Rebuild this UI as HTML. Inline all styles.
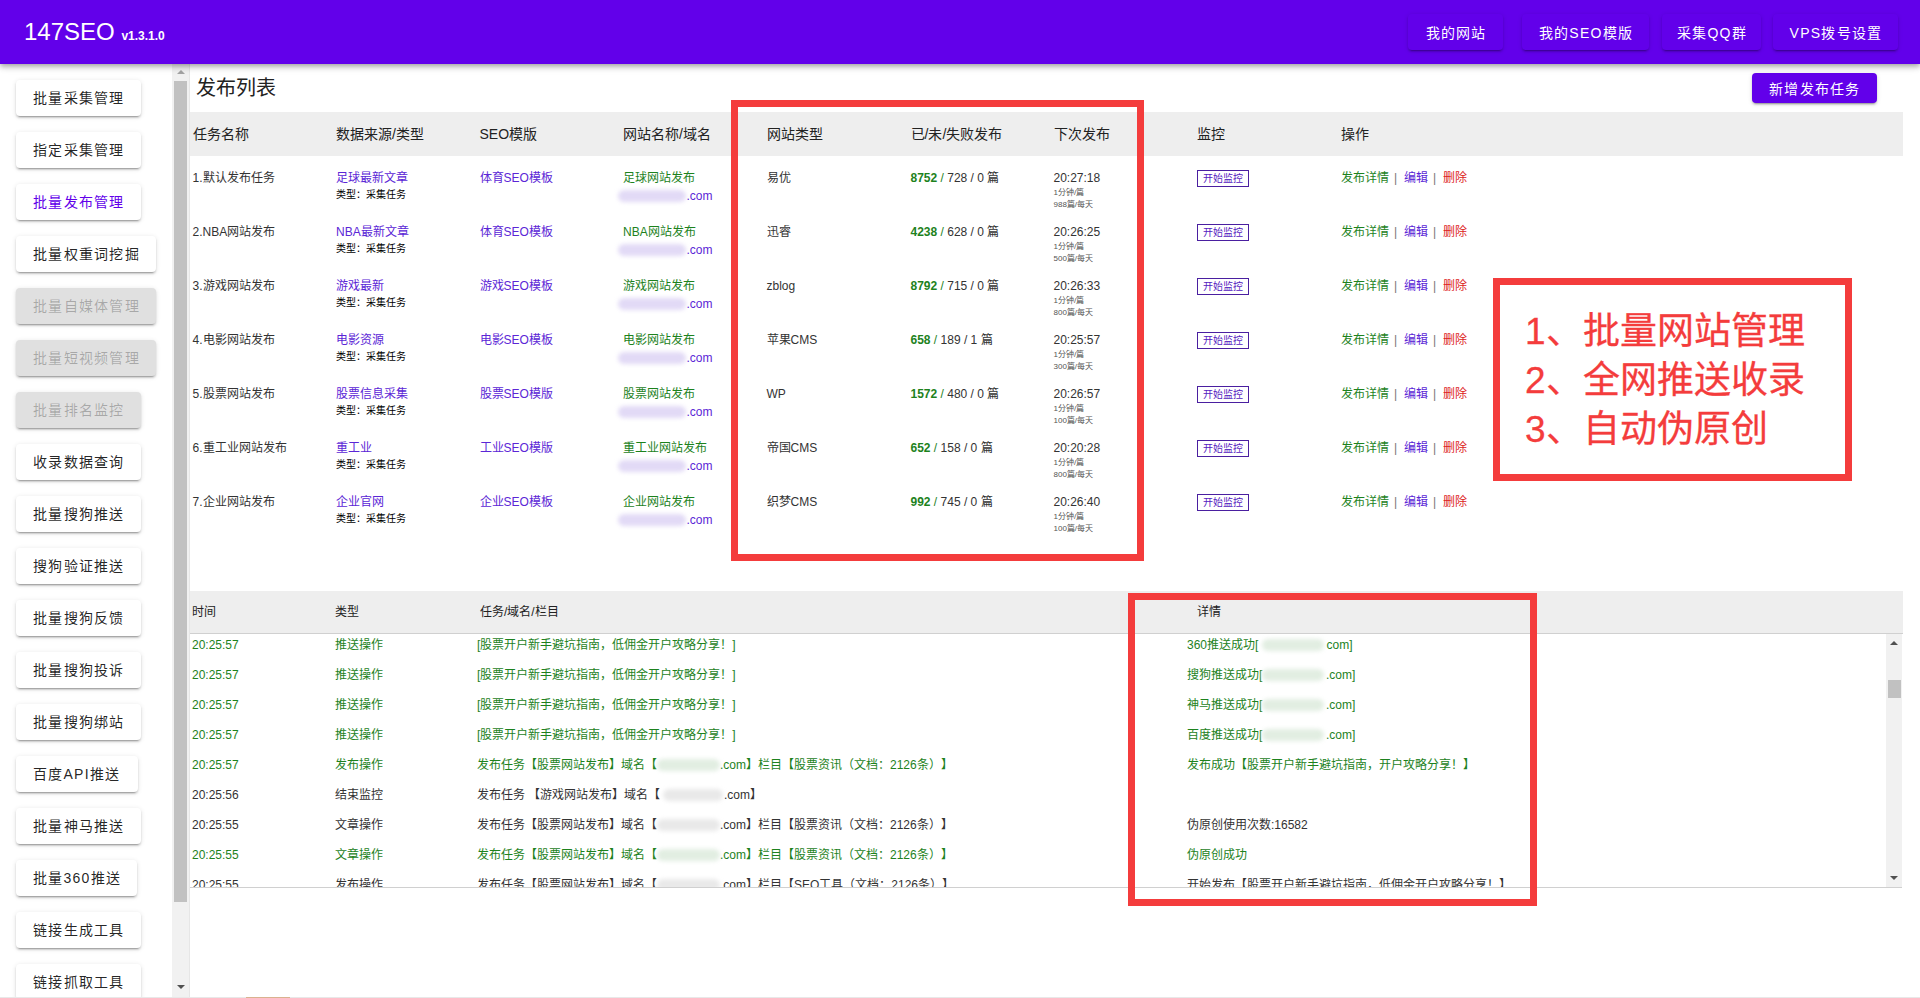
<!DOCTYPE html><html lang="zh-CN"><head><meta charset="utf-8"><style>
*{box-sizing:border-box}
html,body{margin:0;padding:0;width:1920px;height:998px;overflow:hidden;background:#fff;font-family:"Liberation Sans",sans-serif;text-spacing-trim:space-all}
.t{position:absolute;white-space:nowrap}
.hdr{position:absolute;left:0;top:0;width:1920px;height:64px;background:#6200ea;box-shadow:0 2px 4px -1px rgba(0,0,0,.2),0 4px 5px 0 rgba(0,0,0,.14),0 1px 10px 0 rgba(0,0,0,.12);z-index:5}
.nb{position:absolute;top:14px;height:36px;background:#6200ea;border-radius:4px;box-shadow:0 3px 1px -2px rgba(0,0,0,.2),0 2px 2px 0 rgba(0,0,0,.14),0 1px 5px 0 rgba(0,0,0,.12);color:#fff;font-size:14px;letter-spacing:1.25px;font-weight:500;line-height:38px;white-space:nowrap}
.sb{position:absolute;left:16px;height:36px;background:#fff;border-radius:4px;box-shadow:0 3px 1px -2px rgba(0,0,0,.2),0 2px 2px 0 rgba(0,0,0,.14),0 1px 5px 0 rgba(0,0,0,.12);color:rgba(0,0,0,.87);font-size:14px;letter-spacing:1.25px;font-weight:500;line-height:36px;padding-left:17px;white-space:nowrap}
.sb.dis{background:#e0e0e0;color:rgba(0,0,0,.26)}
.sb.act{color:#6200ea}
.box{position:absolute;border:7px solid #f43c3c;z-index:10}
.blob{position:absolute;border-radius:8px;filter:blur(2px)}
</style></head><body>
<div class="hdr">
<div class="t" style="left:24px;top:18px;font-size:24px;line-height:28px;color:#fff">147SEO <span style="font-size:12px;font-weight:bold">v1.3.1.0</span></div>
<div class="nb" style="left:1408px;width:95px;text-align:center;padding-left:1px">我的网站</div>
<div class="nb" style="left:1522px;width:127px;text-align:center;padding-left:1px">我的SEO模版</div>
<div class="nb" style="left:1662px;width:99px;text-align:center;padding-left:1px">采集QQ群</div>
<div class="nb" style="left:1773px;width:125px;text-align:center;padding-left:1px">VPS拨号设置</div>
</div>
<div class="sb" style="top:80px">批量采集管理<span style="display:inline-block;width:16px"></span></div>
<div class="sb" style="top:132px">指定采集管理<span style="display:inline-block;width:16px"></span></div>
<div class="sb act" style="top:184px">批量发布管理<span style="display:inline-block;width:16px"></span></div>
<div class="sb" style="top:236px">批量权重词挖掘<span style="display:inline-block;width:16px"></span></div>
<div class="sb dis" style="top:288px">批量自媒体管理<span style="display:inline-block;width:16px"></span></div>
<div class="sb dis" style="top:340px">批量短视频管理<span style="display:inline-block;width:16px"></span></div>
<div class="sb dis" style="top:392px">批量排名监控<span style="display:inline-block;width:16px"></span></div>
<div class="sb" style="top:444px">收录数据查询<span style="display:inline-block;width:16px"></span></div>
<div class="sb" style="top:496px">批量搜狗推送<span style="display:inline-block;width:16px"></span></div>
<div class="sb" style="top:548px">搜狗验证推送<span style="display:inline-block;width:16px"></span></div>
<div class="sb" style="top:600px">批量搜狗反馈<span style="display:inline-block;width:16px"></span></div>
<div class="sb" style="top:652px">批量搜狗投诉<span style="display:inline-block;width:16px"></span></div>
<div class="sb" style="top:704px">批量搜狗绑站<span style="display:inline-block;width:16px"></span></div>
<div class="sb" style="top:756px">百度API推送<span style="display:inline-block;width:18px"></span></div>
<div class="sb" style="top:808px">批量神马推送<span style="display:inline-block;width:16px"></span></div>
<div class="sb" style="top:860px">批量360推送<span style="display:inline-block;width:16px"></span></div>
<div class="sb" style="top:912px">链接生成工具<span style="display:inline-block;width:16px"></span></div>
<div class="sb" style="top:964px">链接抓取工具<span style="display:inline-block;width:16px"></span></div>
<div style="position:absolute;left:172px;top:64px;width:17px;height:934px;background:#f1f1f1"></div>
<div style="position:absolute;left:174px;top:81px;width:13px;height:821px;background:#c1c1c1"></div>
<div style="position:absolute;left:176.5px;top:70px;width:0;height:0;border-left:4px solid transparent;border-right:4px solid transparent;border-bottom:4px solid #a3a3a3"></div>
<div style="position:absolute;left:176.5px;top:985px;width:0;height:0;border-left:4px solid transparent;border-right:4px solid transparent;border-top:4px solid #505050"></div>
<div style="position:absolute;left:189px;top:64px;width:1px;height:934px;background:#e6e6e6"></div>
<div class="t" style="left:196px;top:74.0px;font-size:20px;line-height:28px;color:#222;">发布列表</div>
<div style="position:absolute;left:1752px;top:73px;width:125px;height:30px;background:#6200ea;border-radius:4px;box-shadow:0 3px 1px -2px rgba(0,0,0,.2),0 2px 2px 0 rgba(0,0,0,.14),0 1px 5px 0 rgba(0,0,0,.12)"></div>
<div class="t" style="left:1769px;top:79.0px;font-size:14px;line-height:20px;color:#fff;letter-spacing:1.25px;font-weight:500">新增发布任务</div>
<div style="position:absolute;left:190px;top:112px;width:1713px;height:44px;background:#eeeeee"></div>
<div class="t" style="left:192.5px;top:124.0px;font-size:14px;line-height:20px;color:#222;">任务名称</div>
<div class="t" style="left:336px;top:124.0px;font-size:14px;line-height:20px;color:#222;">数据来源/类型</div>
<div class="t" style="left:479.5px;top:124.0px;font-size:14px;line-height:20px;color:#222;">SEO模版</div>
<div class="t" style="left:623px;top:124.0px;font-size:14px;line-height:20px;color:#222;">网站名称/域名</div>
<div class="t" style="left:766.5px;top:124.0px;font-size:14px;line-height:20px;color:#222;">网站类型</div>
<div class="t" style="left:910.5px;top:124.0px;font-size:14px;line-height:20px;color:#222;">已/未/失败发布</div>
<div class="t" style="left:1053.5px;top:124.0px;font-size:14px;line-height:20px;color:#222;">下次发布</div>
<div class="t" style="left:1197px;top:124.0px;font-size:14px;line-height:20px;color:#222;">监控</div>
<div class="t" style="left:1341px;top:124.0px;font-size:14px;line-height:20px;color:#222;">操作</div>
<div class="t" style="left:192.5px;top:168.5px;font-size:12px;line-height:18px;color:#333333;">1.默认发布任务</div>
<div class="t" style="left:336px;top:168.5px;font-size:12px;line-height:18px;color:#5b26d6;">足球最新文章</div>
<div class="t" style="left:336px;top:187.5px;font-size:10px;line-height:14px;color:#000;">类型：采集任务</div>
<div class="t" style="left:479.5px;top:168.5px;font-size:12px;line-height:18px;color:#5b26d6;">体育SEO模板</div>
<div class="t" style="left:623px;top:168.5px;font-size:12px;line-height:18px;color:#1d821d;">足球网站发布</div>
<div class="blob" style="left:618px;top:189.5px;width:68px;height:12px;background:#e2daf6"></div>
<div class="t" style="left:686.5px;top:186.5px;font-size:12px;line-height:18px;color:#5b26d6;">.com</div>
<div class="t" style="left:766.5px;top:168.5px;font-size:12px;line-height:18px;color:#333333;">易优</div>
<div class="t" style="left:910.5px;top:168.5px;font-size:12px;line-height:18px;color:#333333;"><b style="color:#1d821d">8752</b><span style="color:#1d821d"> / </span>728 / 0 篇</div>
<div class="t" style="left:1053.5px;top:168.5px;font-size:12px;line-height:18px;color:#333333;">20:27:18</div>
<div class="t" style="left:1053.5px;top:186.5px;font-size:8px;line-height:12px;color:#555;">1分钟/篇</div>
<div class="t" style="left:1053.5px;top:198.5px;font-size:8px;line-height:12px;color:#555;">988篇/每天</div>
<div style="position:absolute;left:1197px;top:170.0px;width:52px;height:17px;border:1px solid #4a1fa0;"></div>
<div class="t" style="left:1202.5px;top:171.5px;font-size:10px;line-height:14px;color:#5520c0;">开始监控</div>
<div class="t" style="left:1341px;top:168.5px;font-size:12px;line-height:18px;color:#1d821d;">发布详情</div>
<div class="t" style="left:1394px;top:168.5px;font-size:12px;line-height:18px;color:#777;">|</div>
<div class="t" style="left:1404px;top:168.5px;font-size:12px;line-height:18px;color:#5b26d6;">编辑</div>
<div class="t" style="left:1433px;top:168.5px;font-size:12px;line-height:18px;color:#777;">|</div>
<div class="t" style="left:1443px;top:168.5px;font-size:12px;line-height:18px;color:#dd2222;">删除</div>
<div class="t" style="left:192.5px;top:222.5px;font-size:12px;line-height:18px;color:#333333;">2.NBA网站发布</div>
<div class="t" style="left:336px;top:222.5px;font-size:12px;line-height:18px;color:#5b26d6;">NBA最新文章</div>
<div class="t" style="left:336px;top:241.5px;font-size:10px;line-height:14px;color:#000;">类型：采集任务</div>
<div class="t" style="left:479.5px;top:222.5px;font-size:12px;line-height:18px;color:#5b26d6;">体育SEO模板</div>
<div class="t" style="left:623px;top:222.5px;font-size:12px;line-height:18px;color:#1d821d;">NBA网站发布</div>
<div class="blob" style="left:618px;top:243.5px;width:68px;height:12px;background:#e2daf6"></div>
<div class="t" style="left:686.5px;top:240.5px;font-size:12px;line-height:18px;color:#5b26d6;">.com</div>
<div class="t" style="left:766.5px;top:222.5px;font-size:12px;line-height:18px;color:#333333;">迅睿</div>
<div class="t" style="left:910.5px;top:222.5px;font-size:12px;line-height:18px;color:#333333;"><b style="color:#1d821d">4238</b><span style="color:#1d821d"> / </span>628 / 0 篇</div>
<div class="t" style="left:1053.5px;top:222.5px;font-size:12px;line-height:18px;color:#333333;">20:26:25</div>
<div class="t" style="left:1053.5px;top:240.5px;font-size:8px;line-height:12px;color:#555;">1分钟/篇</div>
<div class="t" style="left:1053.5px;top:252.5px;font-size:8px;line-height:12px;color:#555;">500篇/每天</div>
<div style="position:absolute;left:1197px;top:224.0px;width:52px;height:17px;border:1px solid #4a1fa0;"></div>
<div class="t" style="left:1202.5px;top:225.5px;font-size:10px;line-height:14px;color:#5520c0;">开始监控</div>
<div class="t" style="left:1341px;top:222.5px;font-size:12px;line-height:18px;color:#1d821d;">发布详情</div>
<div class="t" style="left:1394px;top:222.5px;font-size:12px;line-height:18px;color:#777;">|</div>
<div class="t" style="left:1404px;top:222.5px;font-size:12px;line-height:18px;color:#5b26d6;">编辑</div>
<div class="t" style="left:1433px;top:222.5px;font-size:12px;line-height:18px;color:#777;">|</div>
<div class="t" style="left:1443px;top:222.5px;font-size:12px;line-height:18px;color:#dd2222;">删除</div>
<div class="t" style="left:192.5px;top:276.5px;font-size:12px;line-height:18px;color:#333333;">3.游戏网站发布</div>
<div class="t" style="left:336px;top:276.5px;font-size:12px;line-height:18px;color:#5b26d6;">游戏最新</div>
<div class="t" style="left:336px;top:295.5px;font-size:10px;line-height:14px;color:#000;">类型：采集任务</div>
<div class="t" style="left:479.5px;top:276.5px;font-size:12px;line-height:18px;color:#5b26d6;">游戏SEO模板</div>
<div class="t" style="left:623px;top:276.5px;font-size:12px;line-height:18px;color:#1d821d;">游戏网站发布</div>
<div class="blob" style="left:618px;top:297.5px;width:68px;height:12px;background:#e2daf6"></div>
<div class="t" style="left:686.5px;top:294.5px;font-size:12px;line-height:18px;color:#5b26d6;">.com</div>
<div class="t" style="left:766.5px;top:276.5px;font-size:12px;line-height:18px;color:#333333;">zblog</div>
<div class="t" style="left:910.5px;top:276.5px;font-size:12px;line-height:18px;color:#333333;"><b style="color:#1d821d">8792</b><span style="color:#1d821d"> / </span>715 / 0 篇</div>
<div class="t" style="left:1053.5px;top:276.5px;font-size:12px;line-height:18px;color:#333333;">20:26:33</div>
<div class="t" style="left:1053.5px;top:294.5px;font-size:8px;line-height:12px;color:#555;">1分钟/篇</div>
<div class="t" style="left:1053.5px;top:306.5px;font-size:8px;line-height:12px;color:#555;">800篇/每天</div>
<div style="position:absolute;left:1197px;top:278.0px;width:52px;height:17px;border:1px solid #4a1fa0;"></div>
<div class="t" style="left:1202.5px;top:279.5px;font-size:10px;line-height:14px;color:#5520c0;">开始监控</div>
<div class="t" style="left:1341px;top:276.5px;font-size:12px;line-height:18px;color:#1d821d;">发布详情</div>
<div class="t" style="left:1394px;top:276.5px;font-size:12px;line-height:18px;color:#777;">|</div>
<div class="t" style="left:1404px;top:276.5px;font-size:12px;line-height:18px;color:#5b26d6;">编辑</div>
<div class="t" style="left:1433px;top:276.5px;font-size:12px;line-height:18px;color:#777;">|</div>
<div class="t" style="left:1443px;top:276.5px;font-size:12px;line-height:18px;color:#dd2222;">删除</div>
<div class="t" style="left:192.5px;top:330.5px;font-size:12px;line-height:18px;color:#333333;">4.电影网站发布</div>
<div class="t" style="left:336px;top:330.5px;font-size:12px;line-height:18px;color:#5b26d6;">电影资源</div>
<div class="t" style="left:336px;top:349.5px;font-size:10px;line-height:14px;color:#000;">类型：采集任务</div>
<div class="t" style="left:479.5px;top:330.5px;font-size:12px;line-height:18px;color:#5b26d6;">电影SEO模板</div>
<div class="t" style="left:623px;top:330.5px;font-size:12px;line-height:18px;color:#1d821d;">电影网站发布</div>
<div class="blob" style="left:618px;top:351.5px;width:68px;height:12px;background:#e2daf6"></div>
<div class="t" style="left:686.5px;top:348.5px;font-size:12px;line-height:18px;color:#5b26d6;">.com</div>
<div class="t" style="left:766.5px;top:330.5px;font-size:12px;line-height:18px;color:#333333;">苹果CMS</div>
<div class="t" style="left:910.5px;top:330.5px;font-size:12px;line-height:18px;color:#333333;"><b style="color:#1d821d">658</b><span style="color:#1d821d"> / </span>189 / 1 篇</div>
<div class="t" style="left:1053.5px;top:330.5px;font-size:12px;line-height:18px;color:#333333;">20:25:57</div>
<div class="t" style="left:1053.5px;top:348.5px;font-size:8px;line-height:12px;color:#555;">1分钟/篇</div>
<div class="t" style="left:1053.5px;top:360.5px;font-size:8px;line-height:12px;color:#555;">300篇/每天</div>
<div style="position:absolute;left:1197px;top:332.0px;width:52px;height:17px;border:1px solid #4a1fa0;"></div>
<div class="t" style="left:1202.5px;top:333.5px;font-size:10px;line-height:14px;color:#5520c0;">开始监控</div>
<div class="t" style="left:1341px;top:330.5px;font-size:12px;line-height:18px;color:#1d821d;">发布详情</div>
<div class="t" style="left:1394px;top:330.5px;font-size:12px;line-height:18px;color:#777;">|</div>
<div class="t" style="left:1404px;top:330.5px;font-size:12px;line-height:18px;color:#5b26d6;">编辑</div>
<div class="t" style="left:1433px;top:330.5px;font-size:12px;line-height:18px;color:#777;">|</div>
<div class="t" style="left:1443px;top:330.5px;font-size:12px;line-height:18px;color:#dd2222;">删除</div>
<div class="t" style="left:192.5px;top:384.5px;font-size:12px;line-height:18px;color:#333333;">5.股票网站发布</div>
<div class="t" style="left:336px;top:384.5px;font-size:12px;line-height:18px;color:#5b26d6;">股票信息采集</div>
<div class="t" style="left:336px;top:403.5px;font-size:10px;line-height:14px;color:#000;">类型：采集任务</div>
<div class="t" style="left:479.5px;top:384.5px;font-size:12px;line-height:18px;color:#5b26d6;">股票SEO模版</div>
<div class="t" style="left:623px;top:384.5px;font-size:12px;line-height:18px;color:#1d821d;">股票网站发布</div>
<div class="blob" style="left:618px;top:405.5px;width:68px;height:12px;background:#e2daf6"></div>
<div class="t" style="left:686.5px;top:402.5px;font-size:12px;line-height:18px;color:#5b26d6;">.com</div>
<div class="t" style="left:766.5px;top:384.5px;font-size:12px;line-height:18px;color:#333333;">WP</div>
<div class="t" style="left:910.5px;top:384.5px;font-size:12px;line-height:18px;color:#333333;"><b style="color:#1d821d">1572</b><span style="color:#1d821d"> / </span>480 / 0 篇</div>
<div class="t" style="left:1053.5px;top:384.5px;font-size:12px;line-height:18px;color:#333333;">20:26:57</div>
<div class="t" style="left:1053.5px;top:402.5px;font-size:8px;line-height:12px;color:#555;">1分钟/篇</div>
<div class="t" style="left:1053.5px;top:414.5px;font-size:8px;line-height:12px;color:#555;">100篇/每天</div>
<div style="position:absolute;left:1197px;top:386.0px;width:52px;height:17px;border:1px solid #4a1fa0;"></div>
<div class="t" style="left:1202.5px;top:387.5px;font-size:10px;line-height:14px;color:#5520c0;">开始监控</div>
<div class="t" style="left:1341px;top:384.5px;font-size:12px;line-height:18px;color:#1d821d;">发布详情</div>
<div class="t" style="left:1394px;top:384.5px;font-size:12px;line-height:18px;color:#777;">|</div>
<div class="t" style="left:1404px;top:384.5px;font-size:12px;line-height:18px;color:#5b26d6;">编辑</div>
<div class="t" style="left:1433px;top:384.5px;font-size:12px;line-height:18px;color:#777;">|</div>
<div class="t" style="left:1443px;top:384.5px;font-size:12px;line-height:18px;color:#dd2222;">删除</div>
<div class="t" style="left:192.5px;top:438.5px;font-size:12px;line-height:18px;color:#333333;">6.重工业网站发布</div>
<div class="t" style="left:336px;top:438.5px;font-size:12px;line-height:18px;color:#5b26d6;">重工业</div>
<div class="t" style="left:336px;top:457.5px;font-size:10px;line-height:14px;color:#000;">类型：采集任务</div>
<div class="t" style="left:479.5px;top:438.5px;font-size:12px;line-height:18px;color:#5b26d6;">工业SEO模版</div>
<div class="t" style="left:623px;top:438.5px;font-size:12px;line-height:18px;color:#1d821d;">重工业网站发布</div>
<div class="blob" style="left:618px;top:459.5px;width:68px;height:12px;background:#e2daf6"></div>
<div class="t" style="left:686.5px;top:456.5px;font-size:12px;line-height:18px;color:#5b26d6;">.com</div>
<div class="t" style="left:766.5px;top:438.5px;font-size:12px;line-height:18px;color:#333333;">帝国CMS</div>
<div class="t" style="left:910.5px;top:438.5px;font-size:12px;line-height:18px;color:#333333;"><b style="color:#1d821d">652</b><span style="color:#1d821d"> / </span>158 / 0 篇</div>
<div class="t" style="left:1053.5px;top:438.5px;font-size:12px;line-height:18px;color:#333333;">20:20:28</div>
<div class="t" style="left:1053.5px;top:456.5px;font-size:8px;line-height:12px;color:#555;">1分钟/篇</div>
<div class="t" style="left:1053.5px;top:468.5px;font-size:8px;line-height:12px;color:#555;">800篇/每天</div>
<div style="position:absolute;left:1197px;top:440.0px;width:52px;height:17px;border:1px solid #4a1fa0;"></div>
<div class="t" style="left:1202.5px;top:441.5px;font-size:10px;line-height:14px;color:#5520c0;">开始监控</div>
<div class="t" style="left:1341px;top:438.5px;font-size:12px;line-height:18px;color:#1d821d;">发布详情</div>
<div class="t" style="left:1394px;top:438.5px;font-size:12px;line-height:18px;color:#777;">|</div>
<div class="t" style="left:1404px;top:438.5px;font-size:12px;line-height:18px;color:#5b26d6;">编辑</div>
<div class="t" style="left:1433px;top:438.5px;font-size:12px;line-height:18px;color:#777;">|</div>
<div class="t" style="left:1443px;top:438.5px;font-size:12px;line-height:18px;color:#dd2222;">删除</div>
<div class="t" style="left:192.5px;top:492.5px;font-size:12px;line-height:18px;color:#333333;">7.企业网站发布</div>
<div class="t" style="left:336px;top:492.5px;font-size:12px;line-height:18px;color:#5b26d6;">企业官网</div>
<div class="t" style="left:336px;top:511.5px;font-size:10px;line-height:14px;color:#000;">类型：采集任务</div>
<div class="t" style="left:479.5px;top:492.5px;font-size:12px;line-height:18px;color:#5b26d6;">企业SEO模板</div>
<div class="t" style="left:623px;top:492.5px;font-size:12px;line-height:18px;color:#1d821d;">企业网站发布</div>
<div class="blob" style="left:618px;top:513.5px;width:68px;height:12px;background:#e2daf6"></div>
<div class="t" style="left:686.5px;top:510.5px;font-size:12px;line-height:18px;color:#5b26d6;">.com</div>
<div class="t" style="left:766.5px;top:492.5px;font-size:12px;line-height:18px;color:#333333;">织梦CMS</div>
<div class="t" style="left:910.5px;top:492.5px;font-size:12px;line-height:18px;color:#333333;"><b style="color:#1d821d">992</b><span style="color:#1d821d"> / </span>745 / 0 篇</div>
<div class="t" style="left:1053.5px;top:492.5px;font-size:12px;line-height:18px;color:#333333;">20:26:40</div>
<div class="t" style="left:1053.5px;top:510.5px;font-size:8px;line-height:12px;color:#555;">1分钟/篇</div>
<div class="t" style="left:1053.5px;top:522.5px;font-size:8px;line-height:12px;color:#555;">100篇/每天</div>
<div style="position:absolute;left:1197px;top:494.0px;width:52px;height:17px;border:1px solid #4a1fa0;"></div>
<div class="t" style="left:1202.5px;top:495.5px;font-size:10px;line-height:14px;color:#5520c0;">开始监控</div>
<div class="t" style="left:1341px;top:492.5px;font-size:12px;line-height:18px;color:#1d821d;">发布详情</div>
<div class="t" style="left:1394px;top:492.5px;font-size:12px;line-height:18px;color:#777;">|</div>
<div class="t" style="left:1404px;top:492.5px;font-size:12px;line-height:18px;color:#5b26d6;">编辑</div>
<div class="t" style="left:1433px;top:492.5px;font-size:12px;line-height:18px;color:#777;">|</div>
<div class="t" style="left:1443px;top:492.5px;font-size:12px;line-height:18px;color:#dd2222;">删除</div>
<div style="position:absolute;left:190px;top:591px;width:1713px;height:43px;background:#eeeeee;border-bottom:1px solid #d0d0d0"></div>
<div class="t" style="left:192px;top:603.0px;font-size:12px;line-height:18px;color:#222;">时间</div>
<div class="t" style="left:335px;top:603.0px;font-size:12px;line-height:18px;color:#222;">类型</div>
<div class="t" style="left:480px;top:603.0px;font-size:12px;line-height:18px;color:#222;">任务/域名/栏目</div>
<div class="t" style="left:1197px;top:603.0px;font-size:12px;line-height:18px;color:#222;">详情</div>
<div style="position:absolute;left:190px;top:887px;width:1712px;height:1px;background:#d0d0d0"></div>
<div style="position:absolute;left:1886px;top:634px;width:16px;height:253px;background:#f1f1f1"></div>
<div style="position:absolute;left:1888px;top:680px;width:13px;height:18px;background:#c1c1c1"></div>
<div style="position:absolute;left:1890px;top:641px;width:0;height:0;border-left:4px solid transparent;border-right:4px solid transparent;border-bottom:4px solid #505050"></div>
<div style="position:absolute;left:1890px;top:876px;width:0;height:0;border-left:4px solid transparent;border-right:4px solid transparent;border-top:4px solid #505050"></div>
<div style="position:absolute;left:190px;top:634px;width:1696px;height:253px;overflow:hidden">
<div class="t" style="left:2px;top:1.5px;font-size:12px;line-height:18px;color:#1d821d">20:25:57</div>
<div class="t" style="left:144.5px;top:1.5px;font-size:12px;line-height:18px;color:#1d821d">推送操作</div>
<div class="t" style="left:287px;top:1.5px;font-size:12px;line-height:18px;color:#1d821d">[股票开户新手避坑指南，低佣金开户攻略分享！]</div>
<div class="t" style="left:997px;top:1.5px;font-size:12px;line-height:18px;color:#1d821d">360推送成功[</div>
<div class="blob" style="left:1072px;top:4.5px;width:62px;height:12px;background:#e2eee2"></div>
<div class="t" style="left:1136.5px;top:1.5px;font-size:12px;line-height:18px;color:#1d821d">com]</div>
<div class="t" style="left:2px;top:31.5px;font-size:12px;line-height:18px;color:#1d821d">20:25:57</div>
<div class="t" style="left:144.5px;top:31.5px;font-size:12px;line-height:18px;color:#1d821d">推送操作</div>
<div class="t" style="left:287px;top:31.5px;font-size:12px;line-height:18px;color:#1d821d">[股票开户新手避坑指南，低佣金开户攻略分享！]</div>
<div class="t" style="left:997px;top:31.5px;font-size:12px;line-height:18px;color:#1d821d">搜狗推送成功[</div>
<div class="blob" style="left:1072px;top:34.5px;width:62px;height:12px;background:#e2eee2"></div>
<div class="t" style="left:1136px;top:31.5px;font-size:12px;line-height:18px;color:#1d821d">.com]</div>
<div class="t" style="left:2px;top:61.5px;font-size:12px;line-height:18px;color:#1d821d">20:25:57</div>
<div class="t" style="left:144.5px;top:61.5px;font-size:12px;line-height:18px;color:#1d821d">推送操作</div>
<div class="t" style="left:287px;top:61.5px;font-size:12px;line-height:18px;color:#1d821d">[股票开户新手避坑指南，低佣金开户攻略分享！]</div>
<div class="t" style="left:997px;top:61.5px;font-size:12px;line-height:18px;color:#1d821d">神马推送成功[</div>
<div class="blob" style="left:1072px;top:64.5px;width:62px;height:12px;background:#e2eee2"></div>
<div class="t" style="left:1136px;top:61.5px;font-size:12px;line-height:18px;color:#1d821d">.com]</div>
<div class="t" style="left:2px;top:91.5px;font-size:12px;line-height:18px;color:#1d821d">20:25:57</div>
<div class="t" style="left:144.5px;top:91.5px;font-size:12px;line-height:18px;color:#1d821d">推送操作</div>
<div class="t" style="left:287px;top:91.5px;font-size:12px;line-height:18px;color:#1d821d">[股票开户新手避坑指南，低佣金开户攻略分享！]</div>
<div class="t" style="left:997px;top:91.5px;font-size:12px;line-height:18px;color:#1d821d">百度推送成功[</div>
<div class="blob" style="left:1072px;top:94.5px;width:62px;height:12px;background:#e2eee2"></div>
<div class="t" style="left:1136px;top:91.5px;font-size:12px;line-height:18px;color:#1d821d">.com]</div>
<div class="t" style="left:2px;top:121.5px;font-size:12px;line-height:18px;color:#1d821d">20:25:57</div>
<div class="t" style="left:144.5px;top:121.5px;font-size:12px;line-height:18px;color:#1d821d">发布操作</div>
<div class="t" style="left:287px;top:121.5px;font-size:12px;line-height:18px;color:#1d821d">发布任务【股票网站发布】域名【</div>
<div class="blob" style="left:467px;top:124.5px;width:63px;height:12px;background:#e2eee2"></div>
<div class="t" style="left:530px;top:121.5px;font-size:12px;line-height:18px;color:#1d821d">.com】栏目【股票资讯（文档：2126条）】</div>
<div class="t" style="left:997px;top:121.5px;font-size:12px;line-height:18px;color:#1d821d">发布成功【股票开户新手避坑指南，开户攻略分享！】</div>
<div class="t" style="left:2px;top:151.5px;font-size:12px;line-height:18px;color:#333333">20:25:56</div>
<div class="t" style="left:144.5px;top:151.5px;font-size:12px;line-height:18px;color:#333333">结束监控</div>
<div class="t" style="left:287px;top:151.5px;font-size:12px;line-height:18px;color:#333333">发布任务 【游戏网站发布】域名【</div>
<div class="blob" style="left:473px;top:154.5px;width:60px;height:12px;background:#e9e9e9"></div>
<div class="t" style="left:534px;top:151.5px;font-size:12px;line-height:18px;color:#333333">.com】</div>
<div class="t" style="left:2px;top:181.5px;font-size:12px;line-height:18px;color:#333333">20:25:55</div>
<div class="t" style="left:144.5px;top:181.5px;font-size:12px;line-height:18px;color:#333333">文章操作</div>
<div class="t" style="left:287px;top:181.5px;font-size:12px;line-height:18px;color:#333333">发布任务【股票网站发布】域名【</div>
<div class="blob" style="left:467px;top:184.5px;width:63px;height:12px;background:#e9e9e9"></div>
<div class="t" style="left:530px;top:181.5px;font-size:12px;line-height:18px;color:#333333">.com】栏目【股票资讯（文档：2126条）】</div>
<div class="t" style="left:997px;top:181.5px;font-size:12px;line-height:18px;color:#333333">伪原创使用次数:16582</div>
<div class="t" style="left:2px;top:211.5px;font-size:12px;line-height:18px;color:#1d821d">20:25:55</div>
<div class="t" style="left:144.5px;top:211.5px;font-size:12px;line-height:18px;color:#1d821d">文章操作</div>
<div class="t" style="left:287px;top:211.5px;font-size:12px;line-height:18px;color:#1d821d">发布任务【股票网站发布】域名【</div>
<div class="blob" style="left:467px;top:214.5px;width:63px;height:12px;background:#e2eee2"></div>
<div class="t" style="left:530px;top:211.5px;font-size:12px;line-height:18px;color:#1d821d">.com】栏目【股票资讯（文档：2126条）】</div>
<div class="t" style="left:997px;top:211.5px;font-size:12px;line-height:18px;color:#1d821d">伪原创成功</div>
<div class="t" style="left:2px;top:241.5px;font-size:12px;line-height:18px;color:#333333">20:25:55</div>
<div class="t" style="left:144.5px;top:241.5px;font-size:12px;line-height:18px;color:#333333">发布操作</div>
<div class="t" style="left:287px;top:241.5px;font-size:12px;line-height:18px;color:#333333">发布任务【股票网站发布】域名【</div>
<div class="blob" style="left:467px;top:244.5px;width:63px;height:12px;background:#e9e9e9"></div>
<div class="t" style="left:530px;top:241.5px;font-size:12px;line-height:18px;color:#333333">.com】栏目【SEO工具（文档：2126条）】</div>
<div class="t" style="left:997px;top:241.5px;font-size:12px;line-height:18px;color:#333333">开始发布【股票开户新手避坑指南，低佣金开户攻略分享！】</div>
</div>
<div class="box" style="left:731px;top:100px;width:413px;height:461px"></div>
<div class="box" style="left:1493px;top:278px;width:359px;height:203px"></div>
<div class="box" style="left:1128px;top:593px;width:409px;height:313px"></div>
<div class="t" style="left:1525px;top:307.5px;font-size:37px;line-height:48px;color:#f43c3c;-webkit-text-stroke:0.3px #f43c3c">1、批量网站管理</div>
<div class="t" style="left:1525px;top:356.5px;font-size:37px;line-height:48px;color:#f43c3c;-webkit-text-stroke:0.3px #f43c3c">2、全网推送收录</div>
<div class="t" style="left:1525px;top:405.5px;font-size:37px;line-height:48px;color:#f43c3c;-webkit-text-stroke:0.3px #f43c3c">3、自动伪原创</div>
<div style="position:absolute;left:0;top:997px;width:1920px;height:1px;background:#e8e8e8"></div>
<div style="position:absolute;left:246px;top:997px;width:44px;height:1px;background:#d9b28f"></div>
</body></html>
